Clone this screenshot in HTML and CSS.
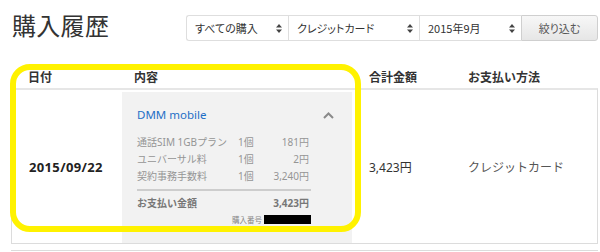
FILE: index.html
```html
<!DOCTYPE html>
<html lang="ja">
<head>
<meta charset="utf-8">
<title>購入履歴</title>
<link rel="stylesheet" href="styles.css">
</head>
<body>
<div class="page">
  <div class="top">
    <h1 class="title">購入履歴</h1>
    <div class="filters">
      <div class="sel sel-a"><span>すべての購入</span><svg class="updown" width="6" height="9" viewBox="0 0 6 9"><path d="M3 0L6 3.5H0Z M3 9L6 5.5H0Z" fill="#444"/></svg></div>
      <div class="sel sel-b"><span>クレジットカード</span><svg class="updown" width="6" height="9" viewBox="0 0 6 9"><path d="M3 0L6 3.5H0Z M3 9L6 5.5H0Z" fill="#444"/></svg></div>
      <div class="sel sel-c"><span>2015年9月</span><svg class="updown" width="6" height="9" viewBox="0 0 6 9"><path d="M3 0L6 3.5H0Z M3 9L6 5.5H0Z" fill="#444"/></svg></div>
      <div class="btn">絞り込む</div>
    </div>
  </div>

  <div class="table">
    <div class="thead cols">
      <div class="c1">日付</div>
      <div class="c2">内容</div>
      <div class="c3">合計金額</div>
      <div class="c4">お支払い方法</div>
    </div>
    <div class="row cols">
      <div class="c1 date">2015/09/22</div>
      <div class="c2 detail">
        <div class="panel">
          <div class="shop">DMM mobile</div>
          <svg class="chev" width="11" height="7" viewBox="0 0 11 7"><path d="M1 6L5.5 1.5L10 6" fill="none" stroke="#8a8a8a" stroke-width="2"/></svg>
          <div class="items">
            <div class="name">通話SIM 1GBプラン</div><div class="qty">1個</div><div class="price">181円</div>
            <div class="name">ユニバーサル料</div><div class="qty">1個</div><div class="price">2円</div>
            <div class="name">契約事務手数料</div><div class="qty">1個</div><div class="price">3,240円</div>
          </div>
          <div class="total">
            <div class="tl">お支払い金額</div><div class="tv">3,423円</div>
          </div>
          <div class="order"><span class="ol">購入番号</span><span class="mask"></span></div>
        </div>
      </div>
      <div class="c3 amount">3,423円</div>
      <div class="c4 pay">クレジットカード</div>
    </div>
    <div class="row next"></div>
  </div>

  <div class="highlight"></div>
</div>
</body>
</html>
```

FILE: styles.css
```css
* { box-sizing: border-box; }
html, body { margin: 0; padding: 0; background: #fff; }
body {
  font-family: "Noto Sans", "Noto Sans CJK JP", sans-serif;
  color: #333;
  overflow: hidden;
}
.page {
  position: relative;
  width: 600px;
  height: 252px;
  overflow: hidden;
  padding: 0 2px 0 11px;
}
.top {
  height: 64px;
  display: flex;
  justify-content: space-between;
  align-items: flex-start;
}
.title {
  margin: 10px 0 0 1px;
  font-family: "Noto Sans CJK JP", sans-serif;
  font-weight: 400;
  font-size: 24px;
  line-height: 30px;
  color: #333;
  letter-spacing: 0.3px;
}
.filters {
  margin-top: 15px;
  display: flex;
  height: 26px;
  font-family: "Noto Sans CJK JP", sans-serif;
  font-size: 11px;
  font-feature-settings: "palt";
  color: #333;
}
.sel {
  display: flex;
  align-items: center;
  justify-content: space-between;
  border: 1px solid #dedede;
  border-right: none;
  padding: 0 6px 0 8px;
  background: #fff;
}
.sel-a { width: 102px; border-radius: 3px 0 0 3px; }
.sel-b { width: 131px; }
.sel-c { width: 102px; }
.btn {
  width: 77px;
  display: flex;
  align-items: center;
  justify-content: center;
  border: 1px solid #cfcfcf;
  border-radius: 0 3px 3px 0;
  background: linear-gradient(#f7f7f7, #e6e6e6);
  color: #555;
}

.table { width: 587px; }
.cols {
  display: grid;
  grid-template-columns: 110px 230px 100px 1fr;
}
.thead {
  height: 24px;
  padding-top: 4px;
  font-family: "Noto Sans CJK JP", sans-serif;
  font-size: 12px;
  line-height: 17px;
  font-weight: 700;
  color: #333;
}
.thead .c1 { padding-left: 17px; }
.thead .c2 { padding-left: 13px; }
.thead .c3 { padding-left: 18px; }
.thead .c4 { padding-left: 17px; }

.row {
  border: 1px solid #dcdcdc;
  border-top: 2px solid #e6e6e6;
}
.row.cols { height: 156px; }
.row > div { display: flex; align-items: center; }
.date {
  padding-left: 17px;
  font-size: 13px;
  font-weight: 700;
  letter-spacing: 0.35px;
  color: #222;
}
.amount {
  padding-left: 17px;
  font-family: "Noto Sans", "Noto Sans CJK JP", sans-serif;
  font-size: 12px;
  color: #333;
}
.pay {
  padding-left: 16px;
  font-family: "Noto Sans CJK JP", sans-serif;
  font-size: 12px;
  color: #555;
}
.row > .detail { align-items: stretch; padding: 2px 0 0 0; }
.panel {
  position: relative;
  width: 230px;
  height: 151px;
  background: #f2f2f2;
  padding: 14px 0 0 15px;
}
.shop {
  font-size: 11.5px;
  line-height: 18px;
  color: #1f6fc6;
}
.chev { position: absolute; top: 20px; left: 201px; }
.items {
  margin-top: 10px;
  width: 174px;
  display: grid;
  grid-template-columns: 101px 30px 1fr;
  font-family: "Noto Sans", "Noto Sans CJK JP", sans-serif;
  font-size: 10px;
  line-height: 17px;
  color: #959595;
}
.price { text-align: right; padding-right: 2px; }
.total {
  margin-top: 4px;
  width: 174px;
  border-top: 2px solid #cdcdcd;
  padding-top: 4px;
  display: flex;
  justify-content: space-between;
  font-size: 10px;
  line-height: 17px;
  font-weight: 700;
  color: #777;
}
.total .tv { padding-right: 2px; }
.order {
  margin-top: 3px;
  width: 174px;
  display: flex;
  justify-content: flex-end;
  align-items: center;
  height: 9px;
}
.ol {
  font-family: "Noto Sans CJK JP", sans-serif;
  font-size: 7.5px;
  line-height: 9px;
  color: #888;
  margin-right: 2px;
}
.mask { width: 47px; height: 9px; background: #000; }

.row.next {
  margin-top: 6px;
  height: 1px;
  border-top: 1px solid #dcdcdc;
  border-bottom: none;
}

.highlight {
  position: absolute;
  left: 10px;
  top: 64px;
  width: 351px;
  height: 168px;
  border: 6px solid #fff200;
  border-radius: 20px;
  pointer-events: none;
}
```
